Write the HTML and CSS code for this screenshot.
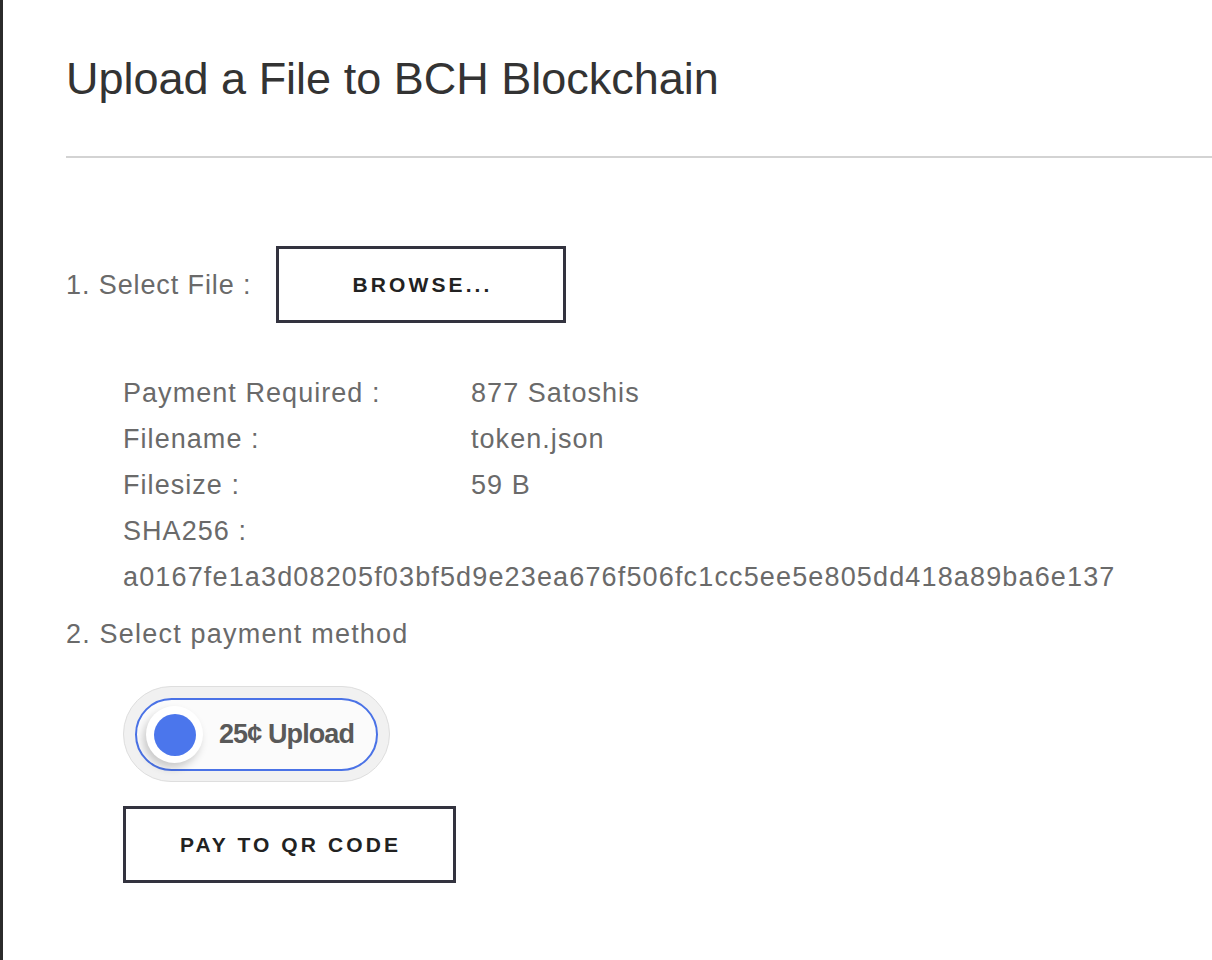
FILE: index.html
```html
<!DOCTYPE html>
<html>
<head>
<meta charset="utf-8">
<title>Upload a File to BCH Blockchain</title>
<link rel="stylesheet" href="styles.css">
</head>
<body>
<main class="page">
  <h1 class="title">Upload a File to BCH Blockchain</h1>
  <hr class="divider">
  <div class="step-row">
    <span class="step-label">1. Select File :</span>
    <button class="btn btn-browse">BROWSE...</button>
  </div>
  <dl class="details">
    <div class="detail"><dt>Payment Required :</dt><dd>877 Satoshis</dd></div>
    <div class="detail"><dt>Filename :</dt><dd>token.json</dd></div>
    <div class="detail"><dt>Filesize :</dt><dd>59 B</dd></div>
    <div class="detail"><dt>SHA256 :</dt><dd></dd></div>
    <div class="hash">a0167fe1a3d08205f03bf5d9e23ea676f506fc1cc5ee5e805dd418a89ba6e137</div>
  </dl>
  <div class="step-label step-two">2. Select payment method</div>
  <div class="indent">
    <div class="toggle-outer">
      <div class="toggle-inner">
        <span class="knob"><span class="knob-dot"></span></span>
        <span class="toggle-text">25¢ Upload</span>
      </div>
    </div>
    <button class="btn btn-pay">PAY TO QR CODE</button>
  </div>
</main>
</body>
</html>
```
FILE: styles.css
```css
html, body {
  margin: 0;
  padding: 0;
  background: #ffffff;
}
body {
  min-height: 960px;
  border-left: 3px solid #2b2b2b;
  box-sizing: border-box;
  font-family: "Liberation Sans", Arial, sans-serif;
}
.page {
  padding: 53px 0 40px 63px;
}
.title {
  margin: 0;
  font-size: 45px;
  line-height: 52px;
  font-weight: normal;
  color: #333333;
}
.divider {
  margin: 51px 0 0 0;
  border: 0;
  height: 2px;
  background: #d3d3d3;
}
.step-row {
  display: flex;
  align-items: center;
  margin-top: 88px;
}
.step-label {
  font-size: 27px;
  line-height: 46px;
  color: #6a6a6a;
  letter-spacing: 0.9px;
}
.btn {
  box-sizing: border-box;
  height: 77px;
  background: #ffffff;
  border: 3px solid #33333f;
  border-radius: 0;
  font-family: "Liberation Sans", Arial, sans-serif;
  font-weight: bold;
  font-size: 21px;
  letter-spacing: 3.1px;
  color: #222222;
  padding: 0;
  text-align: center;
}
.btn-browse {
  width: 290px;
  margin-left: 25px;
  padding-left: 2px;
}
.details {
  margin: 47px 0 0 57px;
  font-size: 27px;
  line-height: 46px;
  color: #6a6a6a;
  letter-spacing: 1.05px;
}
.detail {
  display: flex;
}
.detail dt {
  width: 348px;
  margin: 0;
}
.detail dd {
  margin: 0;
}
.hash {
  letter-spacing: 1.15px;
}
.step-two {
  margin-top: 11px;
  letter-spacing: 1.2px;
}
.indent {
  margin-left: 57px;
}
.toggle-outer {
  box-sizing: border-box;
  width: 267px;
  height: 96px;
  margin-top: 29px;
  padding: 11px;
  border-radius: 48px;
  background: #f1f1f1;
  border: 1px solid #dedede;
}
.toggle-inner {
  box-sizing: border-box;
  height: 73px;
  border-radius: 37px;
  background: #fbfbfb;
  border: 2px solid #4a72e6;
  display: flex;
  align-items: center;
  padding-left: 9px;
}
.knob {
  width: 57px;
  height: 57px;
  border-radius: 50%;
  background: #ffffff;
  box-shadow: -3px 5px 8px rgba(0, 0, 0, 0.2);
  display: flex;
  align-items: center;
  justify-content: center;
  flex: none;
}
.knob-dot {
  width: 42px;
  height: 42px;
  border-radius: 50%;
  background: #4b76ec;
}
.toggle-text {
  margin-left: 16px;
  font-size: 27px;
  font-weight: bold;
  color: #595959;
  letter-spacing: -0.9px;
}
.btn-pay {
  display: block;
  width: 333px;
  margin-top: 24px;
  padding-left: 2px;
}
```
